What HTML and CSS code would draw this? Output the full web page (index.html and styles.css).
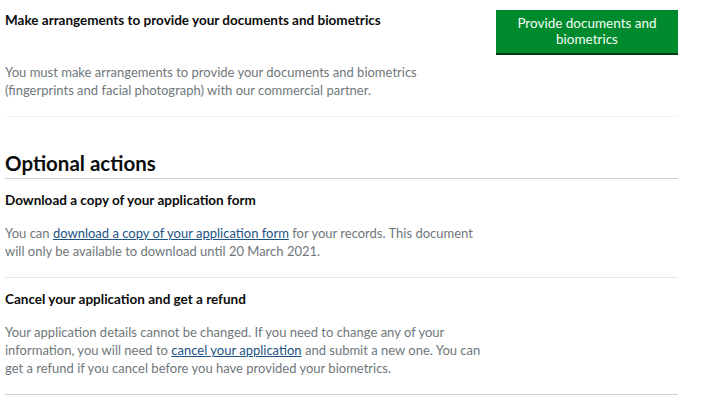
FILE: index.html
```html
<!doctype html>
<html>
<head>
<meta charset="UTF-8">
<meta name="viewport" content="width=device-width, initial-scale=1">
<link rel="stylesheet" href="styles.css">
</head>
<body>
<div class="page">

  <div class="task task-first">
    <div class="task-head">
      <h3 class="task-title">Make arrangements to provide your documents and biometrics</h3>
      <a class="button" href="#">Provide documents and biometrics</a>
    </div>
    <p class="body body-first">You must make arrangements to provide your documents and biometrics (fingerprints and facial photograph) with our commercial partner.</p>
  </div>

  <h2 class="section-title">Optional actions</h2>

  <div class="task task-mid">
    <h3 class="task-title">Download a copy of your application form</h3>
    <p class="body">You can <a href="#">download a copy of your application form</a> for your records. This document will only be available to download until 20 March 2021.</p>
  </div>

  <div class="task task-last">
    <h3 class="task-title">Cancel your application and get a refund</h3>
    <p class="body">Your application details cannot be changed. If you need to change any of your information, you will need to <a href="#">cancel your application</a> and submit a new one. You can get a refund if you cancel before you have provided your biometrics.</p>
  </div>

</div>
</body>
</html>
```

FILE: styles.css
```css
body{
  margin: 0;
  padding: 0;
  background: #fff;
  font-family: 'Lato', 'Liberation Sans', sans-serif;
  color: #0b0c0c;
}

.page{
  width: 673px;
  margin-left: 5px;
}

.task{
  padding: 11px 0 17px;
  border-bottom: 1px solid #e6e6e6;
}

.task-first{
  padding-top: 10px;
  border-bottom-color: #f3f3f3;
}

.task-last{
  border-bottom-color: #d0d0d0;
}

.task-head{
  display: flex;
  justify-content: space-between;
  align-items: flex-start;
}

.task-title{
  margin: 0;
  font-size: 13.5px;
  font-weight: 700;
  line-height: 20px;
}

.body{
  width: 480px;
  margin: 14px 0 0;
  font-size: 13px;
  line-height: 18px;
  color: #6f777b;
}

.body-first{
  margin-top: 10px;
}

.body a{
  color: #1d5384;
  text-decoration: underline;
  text-decoration-thickness: 1px;
}

.button{
  width: 182px;
  height: 43px;
  box-sizing: border-box;
  padding-top: 5px;
  background: #008a2e;
  box-shadow: 0 2px 0 #003a17;
  color: #f4fff4;
  font-size: 13.5px;
  line-height: 16px;
  text-align: center;
  text-decoration: none;
}

.section-title{
  margin: 33px 0 0;
  padding-bottom: 2px;
  font-size: 20.5px;
  line-height: 26px;
  font-weight: 700;
  border-bottom: 1px solid #cfcfcf;
}
```
